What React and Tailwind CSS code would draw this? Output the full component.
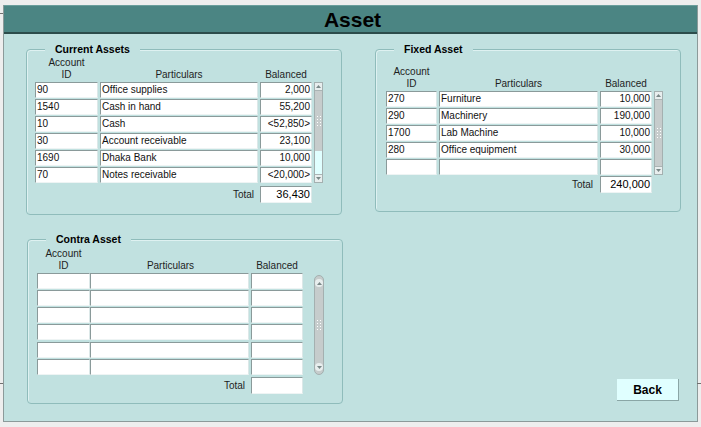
import clsx from "clsx";

const currentRows = [
  ["90", "Office supplies", "2,000"],
  ["1540", "Cash in hand", "55,200"],
  ["10", "Cash", "<52,850>"],
  ["30", "Account receivable", "23,100"],
  ["1690", "Dhaka Bank", "10,000"],
  ["70", "Notes receivable", "<20,000>"],
];

const fixedRows = [
  ["270", "Furniture", "10,000"],
  ["290", "Machinery", "190,000"],
  ["1700", "Lab Machine", "10,000"],
  ["280", "Office equipment", "30,000"],
  ["", "", ""],
];

const contraRows = [0, 1, 2, 3, 4, 5];

function Cell({ children, right, className }) {
  return (
    <div
      className={clsx(
        "h-[16px] bg-white border border-[#8a9a9a] border-r-[#dce8e8] border-b-[#eef4f4] px-[1px] text-[10px] leading-[14px] text-[#111] whitespace-nowrap overflow-hidden",
        right && "text-right",
        className
      )}
    >
      {children}
    </div>
  );
}

function TotalBox({ value }) {
  return (
    <div className="h-[17px] bg-white border border-[#8a9a9a] border-r-[#dce8e8] border-b-[#eef4f4] px-[1px] text-right text-[11px] leading-[15px] text-black">
      {value}
    </div>
  );
}

function Arrow({ up }) {
  return (
    <svg width="5" height="3" viewBox="0 0 5 3">
      <path d={up ? "M0 3 L2.5 0 L5 3 Z" : "M0 0 L2.5 3 L5 0 Z"} fill="#7a8888" />
    </svg>
  );
}

function Grip() {
  return (
    <div className="grid grid-cols-2 gap-x-[2px] gap-y-[2px]">
      {[0, 1, 2, 3, 4, 5, 6, 7].map((i) => (
        <div key={i} className="w-[1px] h-[1px] bg-white" />
      ))}
    </div>
  );
}

function ScrollBar({ height, track }) {
  return (
    <div
      className="w-[9px] flex flex-col border border-[#a4b0b0] bg-[#e2fbfb]"
      style={{ height }}
    >
      <div className="h-[8px] flex items-center justify-center bg-[#e8eeee] border-b border-[#aab4b4]">
        <Arrow up />
      </div>
      <div className="flex-1 flex items-center justify-center bg-[#c6cccc]">
        <Grip />
      </div>
      {track ? <div style={{ height: track }} className="bg-[#e0ffff]" /> : null}
      <div className="h-[8px] flex items-center justify-center bg-[#e8eeee] border-t border-[#aab4b4]">
        <Arrow />
      </div>
    </div>
  );
}

function Group({ title, className, children }) {
  return (
    <div
      className={clsx(
        "relative rounded-[4px] border border-[#8fbcbb] shadow-[inset_1px_1px_0_#def1f1]",
        className
      )}
    >
      <span className="absolute top-[-7px] left-[18px] px-[10px] bg-[#c1e1e0] text-[10.5px] leading-[13px] font-bold text-black">
        {title}
      </span>
      {children}
    </div>
  );
}

function HeadRow({ cols, gap = "gap-x-[2px]" }) {
  return (
    <div className={clsx("grid text-[10px] leading-[12px] text-[#1e1e1e]", gap, cols)}>
      <div className="text-center">
        Account
        <br />
        ID
      </div>
      <div className="text-center self-end">Particulars</div>
      <div className="text-center self-end">Balanced</div>
    </div>
  );
}

export default function App() {
  return (
    <div className="relative w-[701px] h-[427px] bg-[#eeeeee] pt-[5px] pl-[3px] overflow-hidden font-['Liberation_Sans',Arial,sans-serif]">
      <div className="absolute left-0 top-[13px] w-[3px] h-[1px] bg-[#707070]" />
      <div className="absolute left-0 top-[383px] w-[3px] h-[1px] bg-[#707070]" />
      <div className="absolute right-0 top-[383px] w-[4px] h-[1px] bg-[#707070]" />

      <div className="w-[695px] h-[417px] bg-[#c1e1e0] border-l border-r border-b border-[#8c9a9a] flex flex-col">
        <div className="h-[29px] bg-[#4b8583] border-t border-[#6a9e9c] border-b-2 border-b-[#2c4c4b] flex items-center justify-center pl-[4px]">
          <span className="text-[21px] font-bold leading-none text-black">Asset</span>
        </div>

        <div className="flex-1 flex pl-[22px] pt-[15px]">
          {/* left column */}
          <div className="w-[317px] flex flex-col gap-[24px]">
            <Group title="Current Assets" className="w-[316px] h-[166px] pt-[7px] pl-[8px]">
              <HeadRow cols="grid-cols-[63px_158px_52px]" />
              <div className="flex gap-[2px] mt-[1px]">
                <div className="grid grid-cols-[63px_158px_52px] gap-x-[2px] gap-y-[1px]">
                  {currentRows.map((r, i) => (
                    <div key={i} className="contents">
                      <Cell>{r[0]}</Cell>
                      <Cell>{r[1]}</Cell>
                      <Cell right>{r[2]}</Cell>
                    </div>
                  ))}
                </div>
                <ScrollBar height={101} track={23} />
              </div>
              <div className="grid grid-cols-[63px_158px_52px] gap-x-[2px] mt-[3px]">
                <div />
                <div className="text-right pr-[4px] text-[10px] leading-[17px] text-[#1e1e1e]">Total</div>
                <TotalBox value="36,430" />
              </div>
            </Group>

            <Group title="Contra Asset" className="ml-[1px] w-[316px] h-[165px] pt-[8px] pl-[9px]">
              <HeadRow cols="grid-cols-[53px_161px_52px]" gap="gap-x-0" />
              <div className="flex mt-[1px]">
                <div className="grid grid-cols-[53px_161px_52px] gap-x-0 gap-y-[1px]">
                  {contraRows.map((i) => (
                    <div key={i} className="contents">
                      <Cell className="border-r-[#d2dada]" />
                      <Cell className="mr-[2px]" />
                      <Cell />
                    </div>
                  ))}
                </div>
                <div className="ml-[11px] mt-[2px] w-[10px] h-[100px] rounded-full border border-[#a4b0b0] bg-[#c6cccc] flex flex-col items-center justify-between py-[3px]">
                  <div className="w-[8px] h-[8px] rounded-full bg-[#e8eeee] flex items-center justify-center">
                    <Arrow up />
                  </div>
                  <Grip />
                  <div className="w-[8px] h-[8px] rounded-full bg-[#e8eeee] flex items-center justify-center">
                    <Arrow />
                  </div>
                </div>
              </div>
              <div className="grid grid-cols-[53px_161px_52px] mt-[2px]">
                <div />
                <div className="text-right pr-[6px] text-[10px] leading-[17px] text-[#1e1e1e]">Total</div>
                <TotalBox value="" />
              </div>
            </Group>
          </div>

          {/* right column */}
          <div className="ml-[32px] w-[306px] flex flex-col">
            <Group title="Fixed Asset" className="w-[306px] h-[163px] pt-[16px] pl-[10px]">
              <HeadRow cols="grid-cols-[51px_159px_52px]" />
              <div className="flex gap-[2px] mt-[1px]">
                <div className="grid grid-cols-[51px_159px_52px] gap-x-[2px] gap-y-[1px]">
                  {fixedRows.map((r, i) => (
                    <div key={i} className="contents">
                      <Cell>{r[0]}</Cell>
                      <Cell>{r[1]}</Cell>
                      <Cell right>{r[2]}</Cell>
                    </div>
                  ))}
                </div>
                <ScrollBar height={84} />
              </div>
              <div className="grid grid-cols-[51px_159px_52px] gap-x-[2px] mt-[1px]">
                <div />
                <div className="text-right pr-[5px] text-[10px] leading-[17px] text-[#1e1e1e]">Total</div>
                <TotalBox value="240,000" />
              </div>
            </Group>

            <button className="mt-auto mb-[20px] mr-[2px] self-end w-[62px] h-[22px] bg-[#e0ffff] border-r border-b border-[#8aa6a6] text-[12px] font-bold text-black leading-none">
              Back
            </button>
          </div>
        </div>
      </div>
    </div>
  );
}
